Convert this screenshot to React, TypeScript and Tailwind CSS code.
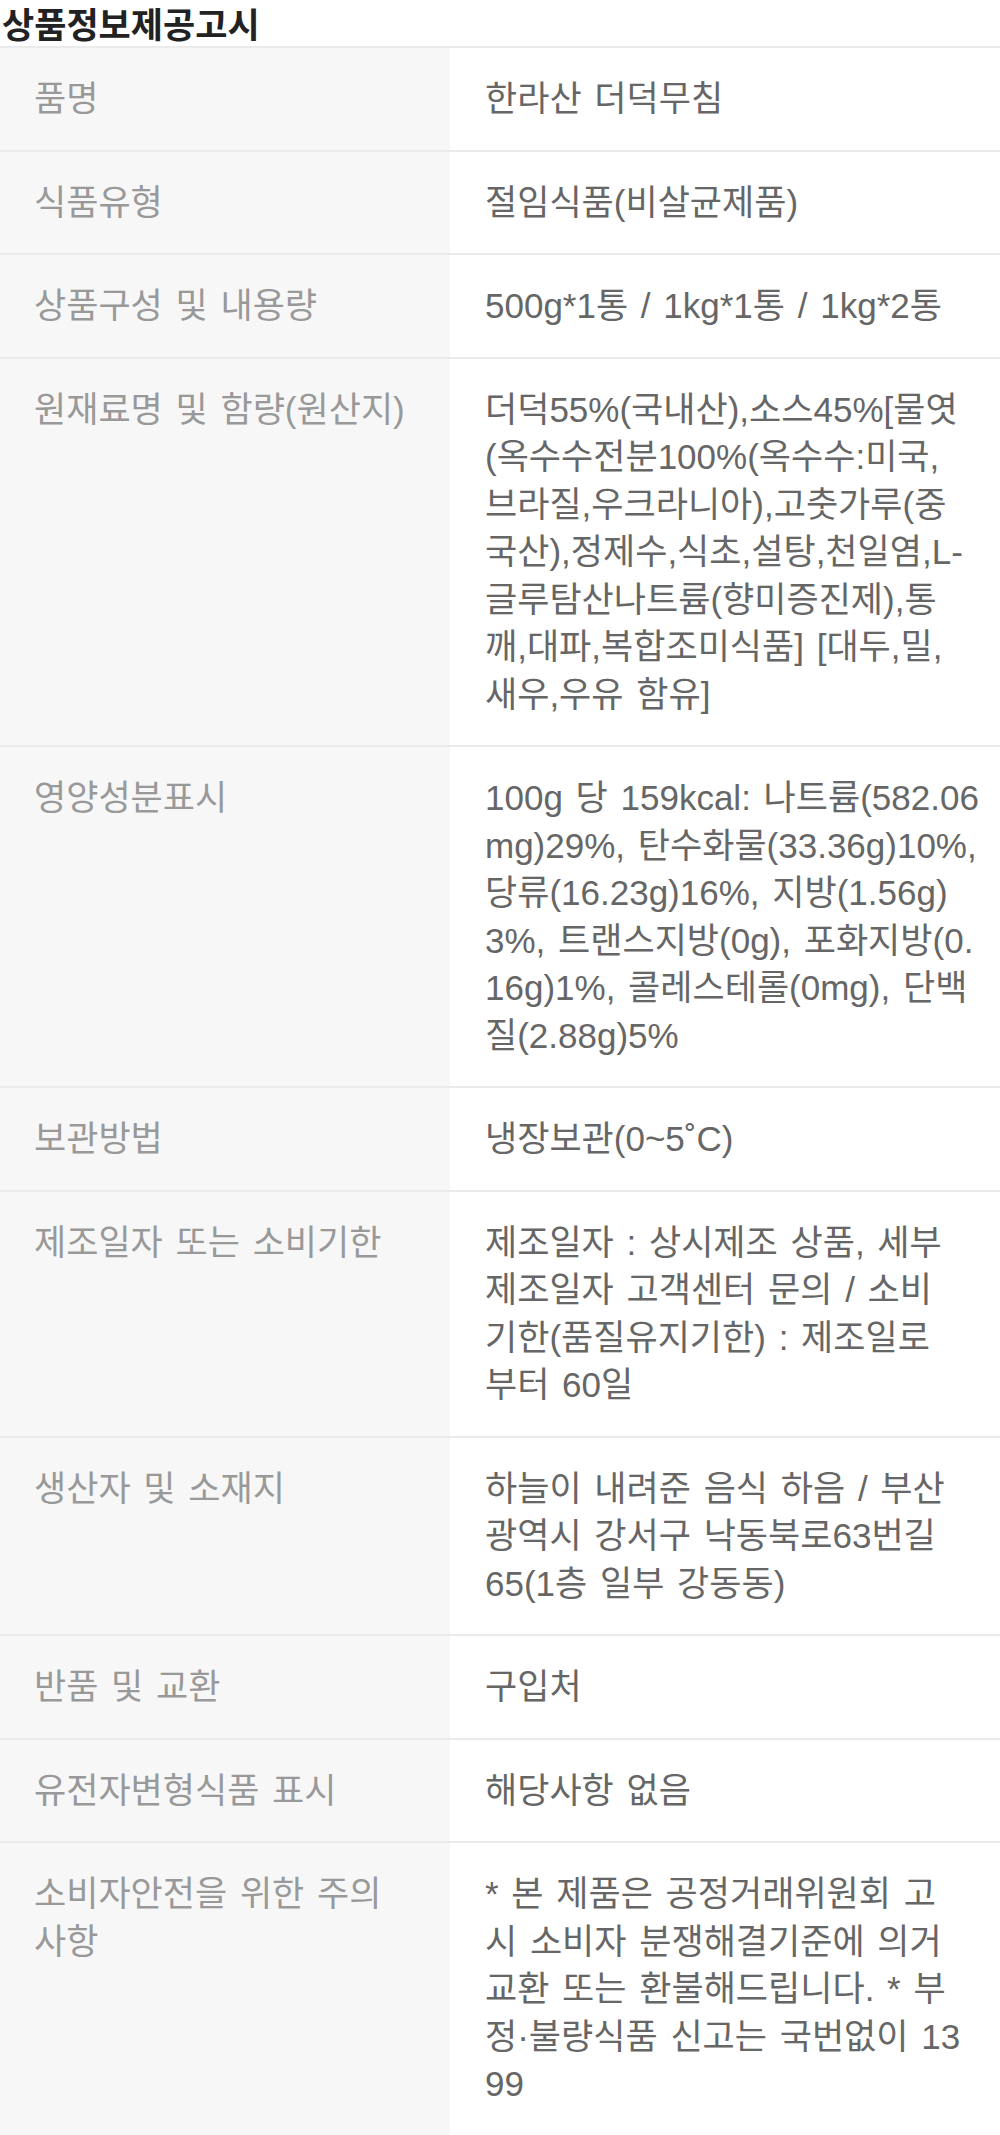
// 상품정보제공고시 — lines kept as shown on the product page
const rows: { label: string[]; value: string[] }[] = [
  { label: ["품명"], value: ["한라산 더덕무침"] },
  { label: ["식품유형"], value: ["절임식품(비살균제품)"] },
  { label: ["상품구성 및 내용량"], value: ["500g*1통 / 1kg*1통 / 1kg*2통"] },
  {
    label: ["원재료명 및 함량(원산지)"],
    value: [
      "더덕55%(국내산),소스45%[물엿",
      "(옥수수전분100%(옥수수:미국,",
      "브라질,우크라니아),고춧가루(중",
      "국산),정제수,식초,설탕,천일염,L-",
      "글루탐산나트륨(향미증진제),통",
      "깨,대파,복합조미식품] [대두,밀,",
      "새우,우유 함유]",
    ],
  },
  {
    label: ["영양성분표시"],
    value: [
      "100g 당 159kcal: 나트륨(582.06",
      "mg)29%, 탄수화물(33.36g)10%,",
      "당류(16.23g)16%, 지방(1.56g)",
      "3%, 트랜스지방(0g), 포화지방(0.",
      "16g)1%, 콜레스테롤(0mg), 단백",
      "질(2.88g)5%",
    ],
  },
  { label: ["보관방법"], value: ["냉장보관(0~5˚C)"] },
  {
    label: ["제조일자 또는 소비기한"],
    value: [
      "제조일자 : 상시제조 상품, 세부",
      "제조일자 고객센터 문의 / 소비",
      "기한(품질유지기한) : 제조일로",
      "부터 60일",
    ],
  },
  {
    label: ["생산자 및 소재지"],
    value: ["하늘이 내려준 음식 하음 / 부산", "광역시 강서구 낙동북로63번길", "65(1층 일부 강동동)"],
  },
  { label: ["반품 및 교환"], value: ["구입처"] },
  { label: ["유전자변형식품 표시"], value: ["해당사항 없음"] },
  {
    label: ["소비자안전을 위한 주의", "사항"],
    value: [
      "* 본 제품은 공정거래위원회 고",
      "시 소비자 분쟁해결기준에 의거",
      "교환 또는 환불해드립니다. * 부",
      "정·불량식품 신고는 국번없이 13",
      "99",
    ],
  },
];

export default function App() {
  return (
    <div className="w-[1000px] bg-white font-['Liberation_Sans','Noto_Sans_CJK_KR',sans-serif]">
      {/* Title */}
      <h2 className="pl-[2px] pt-[2px] pb-[2px] text-[35px] leading-[42px] font-bold text-[#222] font-['Noto_Sans_CJK_KR',sans-serif]">
        상품정보제공고시
      </h2>

      {/* Notice table */}
      <div className="border-t-2 border-[#ebebeb]">
        {rows.map((row) => (
          <div
            key={row.label.join("")}
            className="flex border-b-2 border-[#ebebeb] text-[35px] leading-[47.5px] [word-spacing:3px]"
          >
            <div className="w-[450px] shrink-0 bg-[#f7f7f7] pl-[34px] pr-[30px] py-[27px] text-[#999]">
              {row.label.map((l) => (
                <span key={l} className="block whitespace-nowrap">
                  {l}
                </span>
              ))}
            </div>
            <div className="flex-1 pl-[35px] pr-[30px] py-[27px] text-[#666]">
              {row.value.map((l) => (
                <span key={l} className="block whitespace-nowrap">
                  {l}
                </span>
              ))}
            </div>
          </div>
        ))}
      </div>
    </div>
  );
}
